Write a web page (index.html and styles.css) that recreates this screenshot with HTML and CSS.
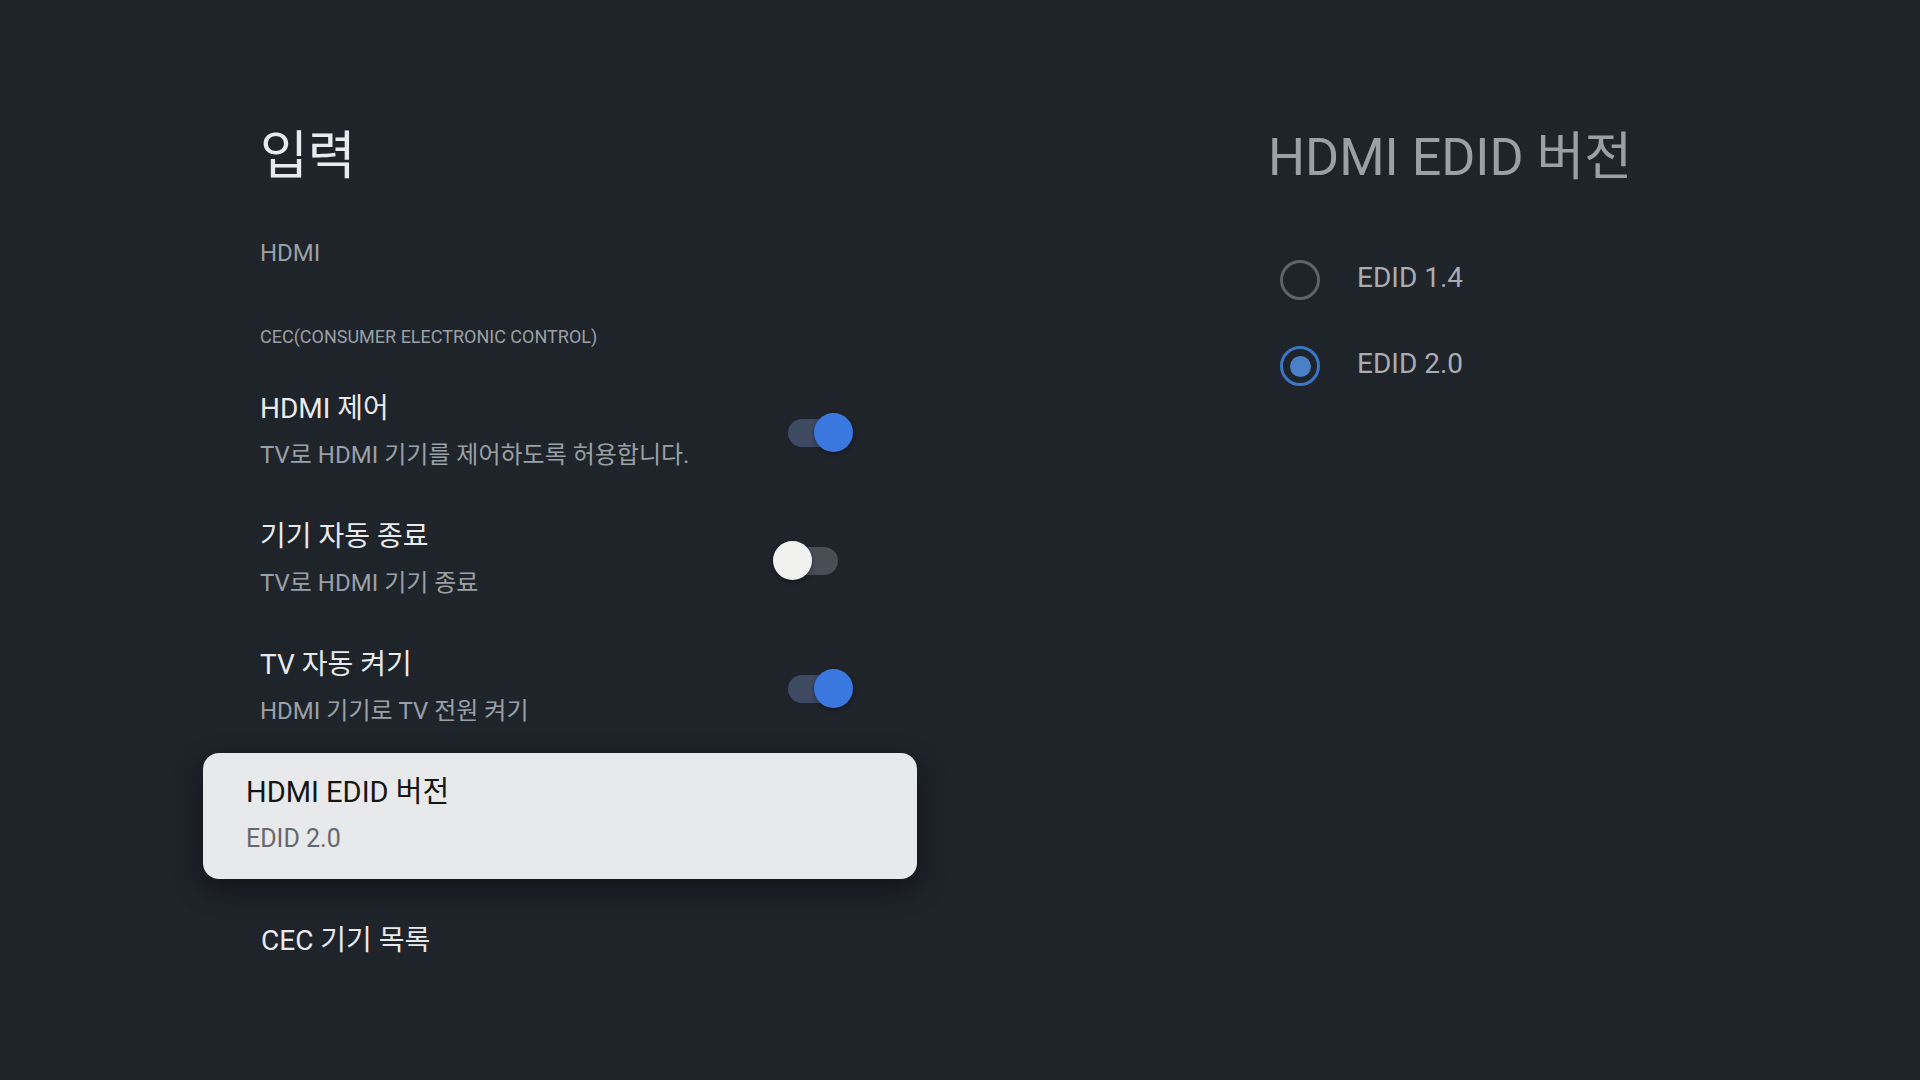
FILE: index.html
```html
<!DOCTYPE html>
<html lang="ko">
<head>
<meta charset="utf-8">
<title>입력</title>
<link rel="stylesheet" href="styles.css">
</head>
<body>
<div class="screen">
  <section class="main-panel">
    <h1 class="page-title">입력</h1>
    <div class="section-label">HDMI</div>
    <div class="category">CEC(CONSUMER ELECTRONIC CONTROL)</div>

    <div class="pref-row">
      <div class="pref-text">
        <div class="pref-title">HDMI 제어</div>
        <div class="pref-summary">TV로 HDMI 기기를 제어하도록 허용합니다.</div>
      </div>
      <div class="switch on"><span class="track"></span><span class="thumb"></span></div>
    </div>

    <div class="pref-row">
      <div class="pref-text">
        <div class="pref-title">기기 자동 종료</div>
        <div class="pref-summary">TV로 HDMI 기기 종료</div>
      </div>
      <div class="switch off"><span class="track"></span><span class="thumb"></span></div>
    </div>

    <div class="pref-row">
      <div class="pref-text">
        <div class="pref-title">TV 자동 켜기</div>
        <div class="pref-summary">HDMI 기기로 TV 전원 켜기</div>
      </div>
      <div class="switch on"><span class="track"></span><span class="thumb"></span></div>
    </div>

    <div class="pref-card">
      <div class="card-title">HDMI EDID 버전</div>
      <div class="card-summary">EDID 2.0</div>
    </div>

    <div class="pref-plain">CEC 기기 목록</div>
  </section>

  <section class="side-panel">
    <h2 class="side-title">HDMI EDID 버전</h2>
    <div class="radio-list">
      <div class="radio-row">
        <span class="radio"></span>
        <span class="radio-label">EDID 1.4</span>
      </div>
      <div class="radio-row">
        <span class="radio checked"></span>
        <span class="radio-label">EDID 2.0</span>
      </div>
    </div>
  </section>
</div>
</body>
</html>
```

FILE: styles.css
```css
html, body {
  margin: 0;
  padding: 0;
}
body {
  width: 1920px;
  height: 1080px;
  overflow: hidden;
  background: #1f232a;
  font-family: Roboto, "Noto Sans CJK KR", sans-serif;
  color: #e8eaed;
}
.screen {
  display: flex;
  height: 1080px;
}
.main-panel {
  width: 714px;
  margin-left: 203px;
  display: flex;
  flex-direction: column;
}
.page-title {
  margin: 127px 0 0 57px;
  font-size: 52px;
  line-height: 60px;
  font-weight: 400;
  color: #e8eaed;
}
.section-label {
  margin: 50px 0 0 57px;
  font-size: 24px;
  line-height: 32px;
  color: #9aa0a6;
}
.category {
  margin: 54px 0 0 57px;
  font-size: 18px;
  line-height: 28px;
  color: #9aa0a6;
}
.pref-row {
  display: flex;
  align-items: center;
  justify-content: space-between;
  height: 128px;
  padding: 0 0 0 57px;
  margin-top: 16px;
  box-sizing: border-box;
}
.pref-row + .pref-row {
  margin-top: 0;
}
.pref-text {
  display: flex;
  flex-direction: column;
}
.pref-title {
  font-size: 28px;
  line-height: 36px;
  color: #e8eaed;
}
.pref-summary {
  margin-top: 12px;
  font-size: 24px;
  line-height: 32px;
  color: #9aa0a6;
}
.switch {
  position: relative;
  width: 50px;
  height: 28px;
  margin-right: 79px;
  margin-top: 3px;
}
.switch .track {
  position: absolute;
  inset: 0;
  border-radius: 14px;
  background: #494d56;
}
.switch.on .track {
  background: #3e4a62;
}
.switch .thumb {
  position: absolute;
  top: -6px;
  left: -15px;
  width: 39px;
  height: 39px;
  border-radius: 50%;
  background: #f1f1ef;
  box-shadow: 0 2px 4px rgba(0, 0, 0, 0.35);
}
.switch.on .thumb {
  left: 26px;
  background: #3a77de;
}
.pref-card {
  margin-top: 2px;
  height: 126px;
  box-sizing: border-box;
  padding: 21px 0 0 43px;
  background: #e8e9eb;
  border-radius: 16px;
  box-shadow: 0 10px 28px rgba(0, 0, 0, 0.45);
}
.card-title {
  font-size: 29px;
  line-height: 36px;
  color: #151515;
}
.card-summary {
  margin-top: 13px;
  font-size: 25px;
  line-height: 32px;
  color: #66686c;
}
.pref-plain {
  margin: 44px 0 0 58px;
  font-size: 28px;
  line-height: 36px;
  color: #e8eaed;
}
.side-panel {
  margin-left: 353px;
  display: flex;
  flex-direction: column;
}
.side-title {
  margin: 126px 0 0 -2px;
  font-size: 52px;
  line-height: 64px;
  font-weight: 400;
  color: #9aa0a6;
  white-space: nowrap;
}
.radio-list {
  margin-top: 66px;
  display: flex;
  flex-direction: column;
  gap: 42px;
}
.radio-row {
  display: flex;
  align-items: center;
  padding-left: 10px;
  gap: 37px;
}
.radio {
  width: 40px;
  height: 40px;
  margin-top: 4px;
  box-sizing: border-box;
  border: 3px solid #5f6267;
  border-radius: 50%;
  display: flex;
  align-items: center;
  justify-content: center;
}
.radio.checked {
  border-color: #3b76c4;
}
.radio.checked::after {
  content: "";
  width: 21px;
  height: 21px;
  border-radius: 50%;
  background: #4a80c6;
}
.radio-label {
  font-size: 28px;
  line-height: 36px;
  color: #a9adb2;
}
```
